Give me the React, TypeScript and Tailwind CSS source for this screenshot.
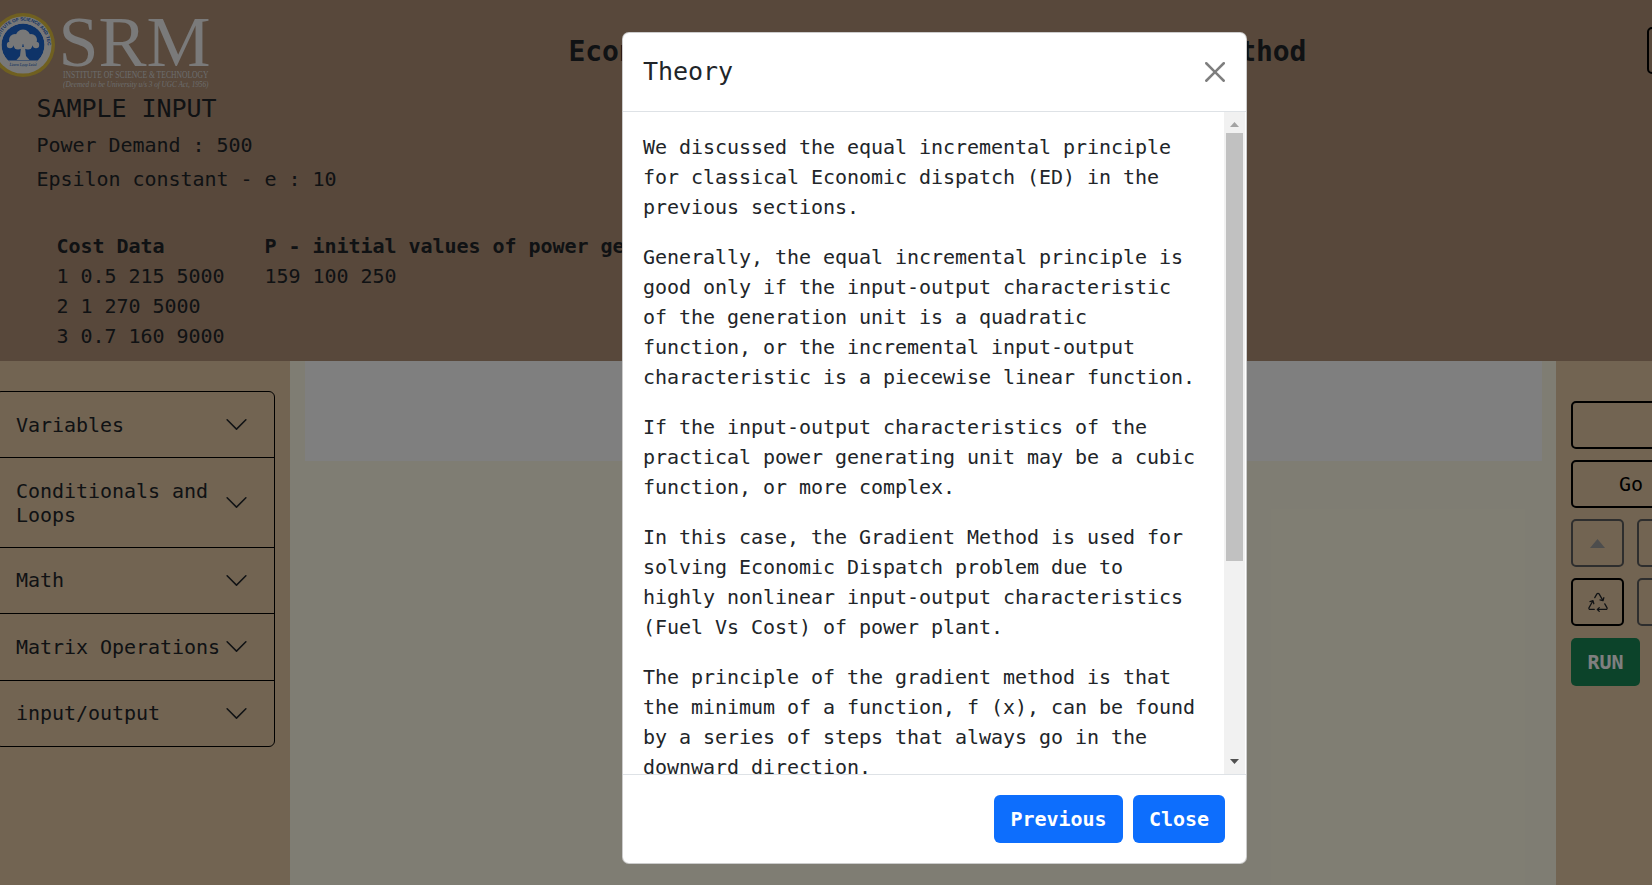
import { BsRecycle } from 'react-icons/bs'

const menuItems = ['Variables', 'Conditionals and Loops', 'Math', 'Matrix Operations', 'input/output']

const paragraphs = [
  'We discussed the equal incremental principle for classical Economic dispatch (ED) in the previous sections.',
  'Generally, the equal incremental principle is good only if the input-output characteristic of the generation unit is a quadratic function, or the incremental input-output characteristic is a piecewise linear function.',
  'If the input-output characteristics of the practical power generating unit may be a cubic function, or more complex.',
  'In this case, the Gradient Method is used for solving Economic Dispatch problem due to highly nonlinear input-output characteristics (Fuel Vs Cost) of power plant.',
  'The principle of the gradient method is that the minimum of a function, f (x), can be found by a series of steps that always go in the downward direction.',
]

const Chevron = () => (
  <svg width="25" height="25" viewBox="0 0 16 16" fill="#212529" className="shrink-0">
    <path fillRule="evenodd" d="M1.646 4.646a.5.5 0 0 1 .708 0L8 10.293l5.646-5.647a.5.5 0 0 1 .708.708l-6 6a.5.5 0 0 1-.708 0l-6-6a.5.5 0 0 1 0-.708z" />
  </svg>
)

const Seal = () => (
  <svg width="64" height="64" viewBox="0 0 64 64" className="shrink-0">
    <circle cx="32" cy="32" r="32" fill="#e0c040" />
    <circle cx="32" cy="32" r="28.6" fill="#f0f0f0" />
    <defs>
      <path id="ring" d="M 7.500 32 A 24.500 24.500 0 0 1 56.500 32" />
      <clipPath id="disc">
        <circle cx="32" cy="32" r="21.5" />
      </clipPath>
    </defs>
    <text fontSize="4.6" fontWeight="700" fill="#1a5cc0" fontFamily="Liberation Sans, sans-serif">
      <textPath href="#ring" startOffset="4%">INSTITUTE OF SCIENCE AND TECHNOLOGY</textPath>
    </text>
    <g clipPath="url(#disc)">
      <circle cx="32" cy="32" r="21.5" fill="#1c66d0" />
      <rect x="8" y="47.5" width="48" height="10" fill="#f0f0f0" />
    </g>
    <g fill="#f0f0f0">
      <circle cx="32" cy="24" r="7.5" />
      <circle cx="24" cy="27" r="6" />
      <circle cx="40" cy="27" r="6" />
      <circle cx="19" cy="32" r="3.2" />
      <circle cx="45" cy="32" r="3.2" />
      <circle cx="27" cy="32" r="4.500" />
      <circle cx="37" cy="32" r="4.500" />
      <path d="M30 34h4l1 9 3.500 4h-13l3.500-4z" />
    </g>
    <text x="32" y="53" textAnchor="middle" fontSize="4" fontStyle="italic" fill="#1a5cc0" fontFamily="Liberation Serif, serif">Learn Leap Lead</text>
  </svg>
)

const Logo = () => (
  <div className="-ml-[9.5px] mt-[13px] flex h-[80px] w-[218px] shrink-0 gap-[4px]">
    <Seal />
    <div className="flex w-[150px] shrink-0 flex-col tracking-normal text-[#f4f4f4] [font-family:'Liberation_Serif',serif]">
      <div className="h-[57px] text-[72px] leading-[58px] whitespace-nowrap">SRM</div>
      <div className="ml-[4px] h-[10px] origin-left scale-x-[.8] text-[9.5px] leading-[10px] whitespace-nowrap text-[#d8d8d8]">INSTITUTE OF SCIENCE &amp; TECHNOLOGY</div>
      <div className="ml-[4px] h-[10px] origin-left scale-x-[.9] text-[8px] leading-[10px] italic whitespace-nowrap text-[#d8d8d8]">(Deemed to be University u/s 3 of UGC Act, 1956)</div>
    </div>
  </div>
)

const SmallButton = ({ dim, children }: { dim?: boolean; children?: React.ReactNode }) => (
  <div className={`flex h-[48px] w-[53px] shrink-0 items-center justify-center rounded-[5px] border-2 ${dim ? 'border-[#5c5c5c]' : 'border-black'}`}>
    {children}
  </div>
)

export default function App() {
  return (
    <div className="relative h-screen w-screen overflow-hidden bg-[#fffbe6] text-[20px] leading-[30px] tracking-[-0.04px] text-[#212529] [font-family:'DejaVu_Sans_Mono',monospace]">
      {/* Top panel */}
      <header className="h-[361px] bg-[#b09076]">
        <div className="flex h-[94px]">
          <Logo />
          <h3 className="ml-[360px] mt-[35px] shrink-0 whitespace-nowrap text-[28px] leading-[34px] font-bold tracking-[-0.09px]">Economic Load Dispatch using Gradient Method</h3>
          <div className="ml-[341px] mt-[27px] h-[47px] w-[120px] shrink-0 rounded-[5px] border-2 border-black" />
        </div>
        <div className="pl-[36.5px]">
          <h5 className="text-[25px] leading-[30px]">SAMPLE INPUT</h5>
          <p className="mt-[6px]">Power Demand : 500</p>
          <p className="mt-[4px]">Epsilon constant - e : 10</p>
          <table className="ml-[20px] mt-[37px]">
            <thead>
              <tr>
                <th className="w-[208px] p-0 text-left font-bold">Cost Data</th>
                <th className="p-0 text-left font-bold whitespace-nowrap">P - initial values of power generation</th>
              </tr>
            </thead>
            <tbody>
              <tr><td className="p-0">1 0.5 215 5000</td><td className="p-0">159 100 250</td></tr>
              <tr><td className="p-0">2 1 270 5000</td><td /></tr>
              <tr><td className="p-0">3 0.7 160 9000</td><td /></tr>
            </tbody>
          </table>
        </div>
      </header>

      <div className="flex h-[524px]">
        {/* Left menu */}
        <aside className="w-[290px] shrink-0 bg-[#e4c8a4] pt-[30px]">
          <div className="-ml-[5px] w-[280px] rounded-[6px] border border-black">
            {menuItems.map((item, i) => (
              <div key={item} className={`flex items-center justify-between gap-[3px] py-[20.2px] pl-[20px] pr-[25px] leading-[24px] ${i < menuItems.length - 1 ? 'border-b border-black' : ''}`}>
                <span>{item}</span>
                <Chevron />
              </div>
            ))}
          </div>
        </aside>

        {/* Main area */}
        <main className="w-[1266px] shrink-0 px-[14.5px]">
          <div className="h-[100px] bg-white" />
        </main>

        {/* Right tools */}
        <aside className="flex-1 overflow-hidden bg-[#e4c8a4] pl-[15px] pt-[40px] text-black">
          <div className="w-[120px]">
            <div className="h-[48px] rounded-[5px] border-2 border-black" />
            <div className="mt-[11px] flex h-[48px] items-center justify-center rounded-[5px] border-2 border-black">Go</div>
          </div>
          <div className="mt-[11px] flex w-[120px] gap-[13px]">
            <SmallButton dim>
              <svg width="15" height="9" viewBox="0 0 15 9" fill="#9a9a9a"><path d="M7.500 0 15 9H0z" /></svg>
            </SmallButton>
            <SmallButton dim />
          </div>
          <div className="mt-[11px] flex w-[120px] gap-[13px]">
            <SmallButton>
              <BsRecycle size={20} color="#212529" />
            </SmallButton>
            <SmallButton dim />
          </div>
          <button className="mt-[12px] h-[48px] w-[69px] rounded-[5px] bg-[#198754] font-bold text-white">RUN</button>
        </aside>
      </div>

      {/* Modal */}
      <div className="absolute inset-0 bg-black/50" />
      <div className="absolute left-[622px] top-[32px] flex h-[832px] w-[625px] flex-col overflow-hidden rounded-[7px] border border-black/20 bg-white">
        <div className="flex h-[79px] shrink-0 items-center justify-between border-b border-[#dee2e6] pl-[20px] pr-[21px]">
          <h5 className="text-[25px] leading-[30px]">Theory</h5>
          <svg width="20" height="20" viewBox="0 0 16 16" fill="#000" opacity="0.5">
            <path d="M.293.293a1 1 0 011.414 0L8 6.586 14.293.293a1 1 0 111.414 1.414L9.414 8l6.293 6.293a1 1 0 01-1.414 1.414L8 9.414l-6.293 6.293a1 1 0 01-1.414-1.414L6.586 8 .293 1.707a1 1 0 010-1.414z" />
          </svg>
        </div>
        <div className="flex h-[662px] shrink-0">
          <div className="w-[601px] shrink-0 overflow-hidden px-[20px] pt-[20px]">
            {paragraphs.map((text) => (
              <p key={text} className="mb-[20px]">{text}</p>
            ))}
          </div>
          <div className="flex w-[21px] shrink-0 flex-col items-center bg-[#f1f1f1]">
            <svg width="9" height="5" viewBox="0 0 9 5" fill="#a3a3a3" className="mt-[10px]"><path d="M4.500 0 9 5H0z" /></svg>
            <div className="mt-[6px] h-[428px] w-[17px] bg-[#c1c1c1]" />
            <svg width="9" height="5" viewBox="0 0 9 5" fill="#505050" className="mt-[198px]"><path d="M0 0h9L4.500 5z" /></svg>
          </div>
        </div>
        <div className="flex flex-1 justify-end gap-[10px] border-t border-[#dee2e6] pr-[21px] pt-[20px]">
          <button className="h-[48px] w-[129px] rounded-[6px] bg-[#0d6efd] font-bold text-white">Previous</button>
          <button className="h-[48px] w-[92px] rounded-[6px] bg-[#0d6efd] font-bold text-white">Close</button>
        </div>
      </div>
    </div>
  )
}
